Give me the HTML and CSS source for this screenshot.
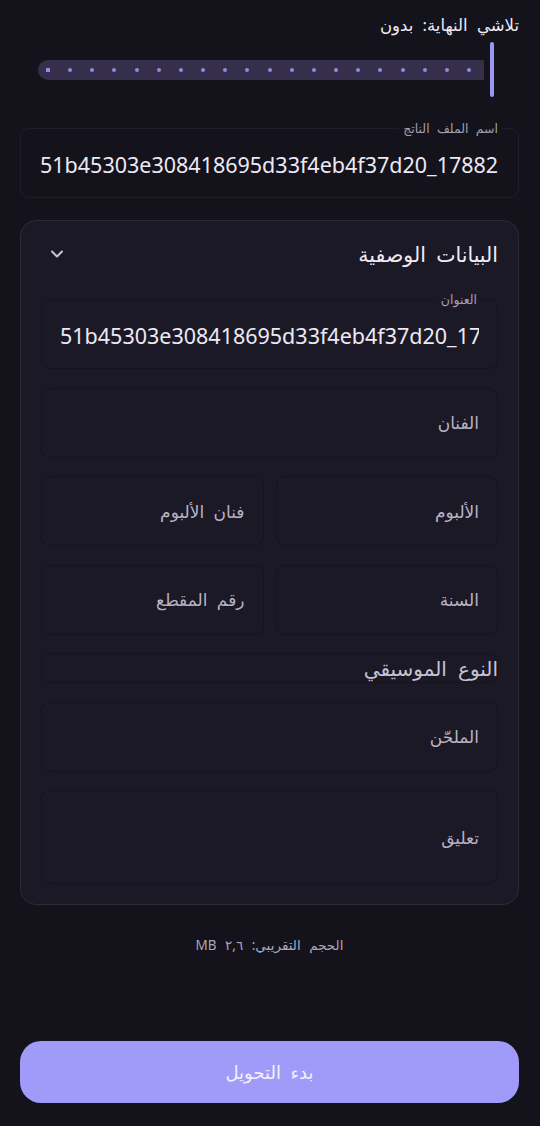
FILE: index.html
```html
<!DOCTYPE html>
<html lang="ar" dir="rtl">
<head>
    <meta charset="UTF-8">
    <meta name="viewport" content="width=device-width, initial-scale=1.0">
    <title>تحويل</title>
    <link rel="stylesheet" href="styles.css">
</head>
<body>
    <main class="screen">
        <section class="fade">
            <div class="fade-label">تلاشي النهاية: بدون</div>
            <div class="slider">
                <div class="thumb"></div>
                <div class="track" id="track"></div>
            </div>
        </section>

        <div class="field outer">
            <span class="field-label">اسم الملف الناتج</span>
            <div class="field-value">51b45303e308418695d33f4eb4f37d20_1788251</div>
        </div>

        <section class="card">
            <header class="card-head">
                <h2>البيانات الوصفية</h2>
                <svg class="chevron" width="20" height="20" viewBox="0 0 24 24">
                    <path d="M6 9l6 6 6-6" fill="none" stroke="#c9c5d6" stroke-width="2.4" stroke-linecap="round" stroke-linejoin="round"/>
                </svg>
            </header>

            <div class="fields">
                <div class="field inner">
                    <span class="field-label">العنوان</span>
                    <div class="field-value">51b45303e308418695d33f4eb4f37d20_1788251</div>
                </div>
                <div class="field inner"><span class="placeholder">الفنان</span></div>
                <div class="pair">
                    <div class="field inner"><span class="placeholder">الألبوم</span></div>
                    <div class="field inner"><span class="placeholder">فنان الألبوم</span></div>
                </div>
                <div class="pair">
                    <div class="field inner"><span class="placeholder">السنة</span></div>
                    <div class="field inner"><span class="placeholder">رقم المقطع</span></div>
                </div>
                <div class="field inner genre"><span class="genre-label">النوع الموسيقي</span></div>
                <div class="field inner"><span class="placeholder">الملحّن</span></div>
                <div class="field inner tall"><span class="placeholder">تعليق</span></div>
            </div>
        </section>

        <p class="size">الحجم التقريبي: ٢,٦ MB</p>

        <button class="convert">بدء التحويل</button>
    </main>
    <script>
        const track = document.getElementById("track");
        for (let i = 0; i < 20; i++) {
            const dot = document.createElement("span");
            dot.className = i === 19 ? "dot stop" : "dot";
            track.appendChild(dot);
        }
    </script>
</body>
</html>
```

FILE: styles.css
```css
*{
    margin: 0;
    padding: 0;
    box-sizing: border-box;
}
body{
    font-family: "Noto Sans", "DejaVu Sans", sans-serif;
    background-color: #14121b;
    color: #ece9f4;
    word-spacing: 5px;
}

.screen{
    min-height: 100vh;
    display: flex;
    flex-direction: column;
    padding: 0 21px 23px 20px;
}

.fade{
    padding-top: 14px;
}
.fade-label{
    font-size: 16.5px;
    line-height: 22px;
    color: #eeebf5;
}
.slider{
    display: flex;
    align-items: center;
    height: 55px;
    margin: 6px 25px 0 18px;
}
.thumb{
    width: 4px;
    height: 55px;
    border-radius: 2px;
    background-color: #9d96f4;
    margin-left: 6px;
}
.track{
    flex: 1;
    height: 20px;
    border-radius: 10px 0 0 10px;
    background-color: #352f4b;
    direction: ltr;
    display: flex;
    align-items: center;
    justify-content: space-between;
    padding: 0 13px 0 8px;
}
.dot{
    width: 4px;
    height: 4px;
    border-radius: 50%;
    background-color: #9189e2;
}
.dot.stop{
    border-radius: 0;
    order: -1;
}

.field{
    position: relative;
    display: flex;
    align-items: center;
    border-radius: 9px;
}
.field.outer{
    height: 70px;
    margin-top: 31px;
    border: 1px solid #211e2a;
    padding: 0 19px;
}
.field-label{
    position: absolute;
    top: -8px;
    right: 16px;
    padding: 0 4px;
    font-size: 12.5px;
    line-height: 16px;
    color: #a29eb0;
    background-color: #14121b;
    word-spacing: 4px;
}
.field.inner .field-label{
    background-color: #1c1927;
}
.field-value{
    flex: 1;
    direction: ltr;
    white-space: nowrap;
    overflow: hidden;
    font-size: 21.5px;
    color: #ece9f4;
    padding-top: 2px;
    word-spacing: normal;
}

.card{
    margin-top: 22px;
    background-color: #1c1927;
    border: 1px solid #2c2939;
    border-radius: 16px;
    padding: 20px 20px 20px;
}
.card-head{
    display: flex;
    justify-content: space-between;
    align-items: center;
    height: 26px;
    margin-bottom: 32px;
}
.card-head h2{
    font-size: 20.5px;
    font-weight: normal;
    color: #efecf6;
}
.chevron{
    margin-left: 6px;
}

.fields{
    display: flex;
    flex-direction: column;
    gap: 18.5px;
}
.pair{
    display: grid;
    grid-template-columns: 1fr 1fr;
    gap: 12px;
}
.field.inner{
    height: 70px;
    border: 1.5px solid #15131d;
    padding: 0 18px;
}
.field.tall{
    height: 94px;
}
.placeholder{
    font-size: 17px;
    color: #b7b3c4;
}
.field.genre{
    height: 30px;
    padding: 0;
}
.genre-label{
    font-size: 20px;
    color: #c7c3d3;
    white-space: nowrap;
    margin-right: -1px;
    word-spacing: 6px;
}

.size{
    margin-top: 31px;
    text-align: center;
    font-size: 13.5px;
    color: #aaa6b6;
}

.convert{
    margin-top: auto;
    height: 62px;
    width: 100%;
    border: none;
    border-radius: 21px;
    background-color: #a09bf8;
    color: #f3f1fd;
    font-family: inherit;
    font-size: 18px;
    word-spacing: 5px;
}
```
